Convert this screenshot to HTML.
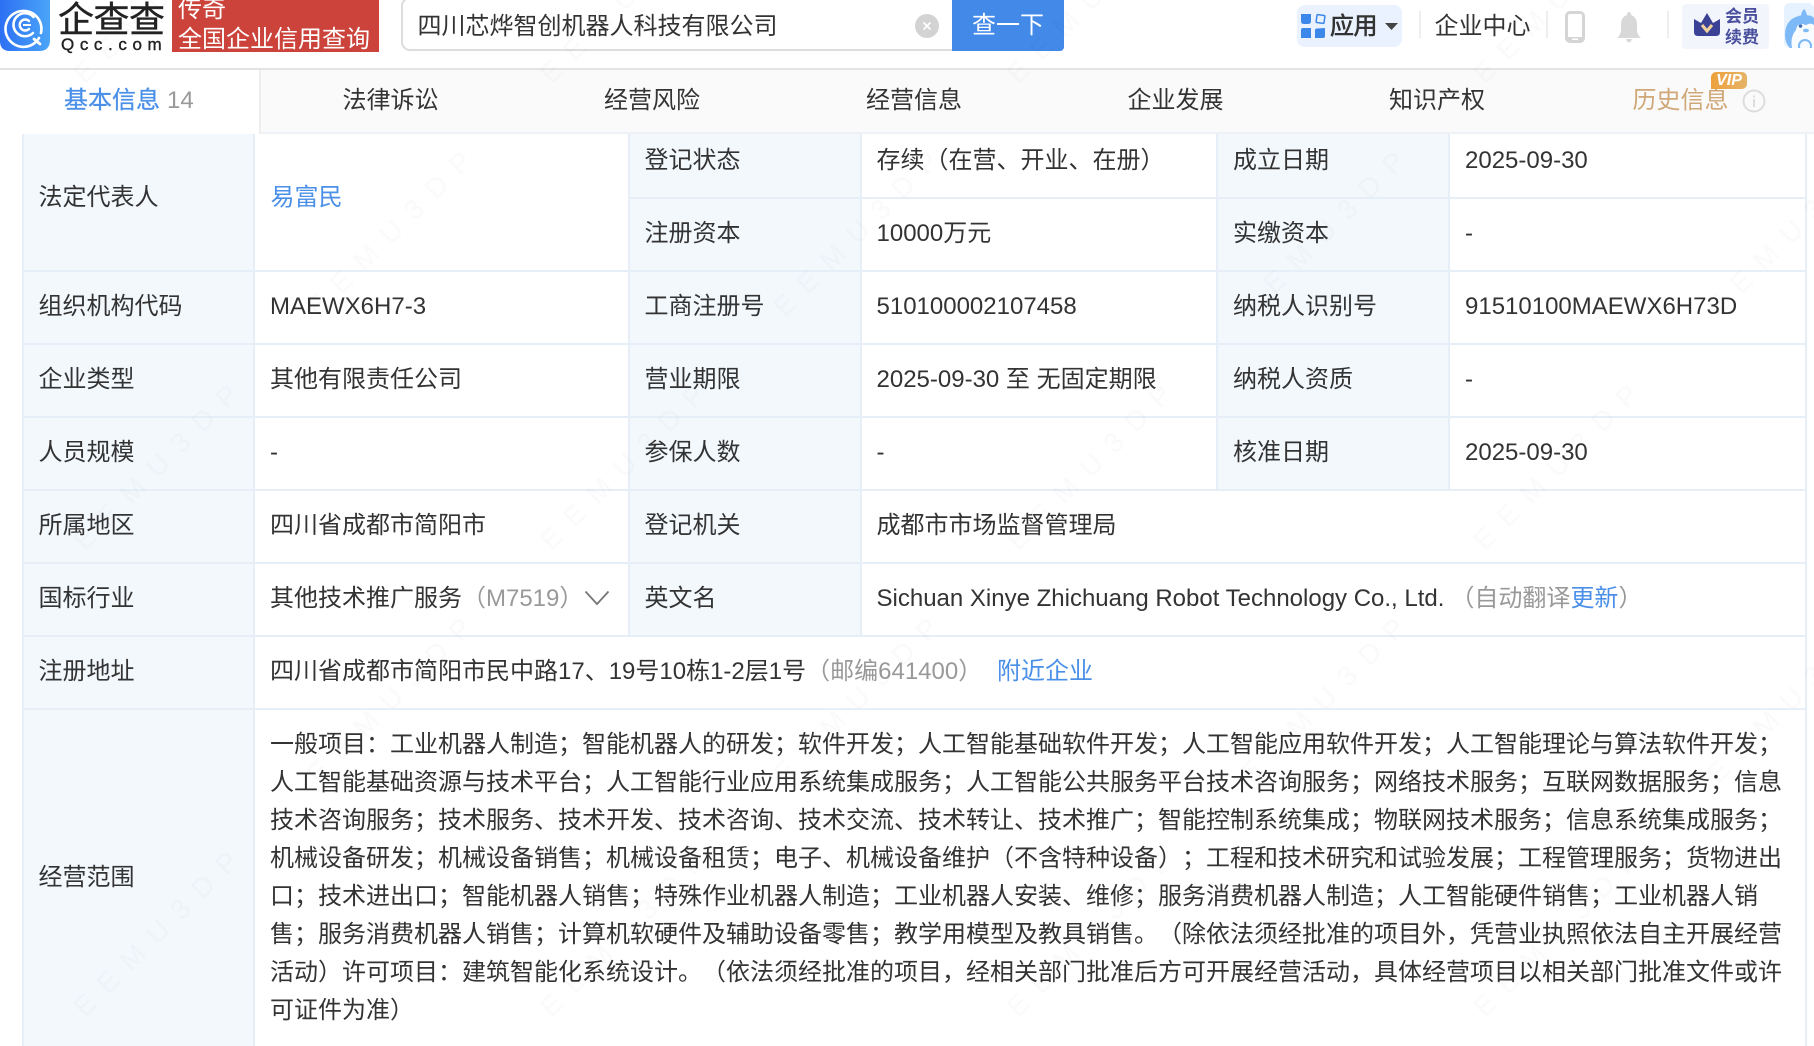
<!DOCTYPE html>
<html lang="zh-CN"><head><meta charset="utf-8"><title>企查查</title>
<style>
html,body{margin:0;padding:0;background:#fff}
body{width:1814px;height:1046px;position:relative;overflow:hidden;font-family:"Liberation Sans","Noto Sans CJK SC",sans-serif;font-size:24px;color:#333;text-spacing-trim:space-all;font-feature-settings:"chws" 0,"halt" 0,"palt" 0}
.a{position:absolute}
.t{position:absolute;white-space:nowrap;line-height:36px;height:34px}
.l{position:absolute;background:#f3f8fd}
.h{position:absolute;height:2px;background:#e6eff7;left:23px;width:1784px}
.v{position:absolute;width:2px;background:#e6eff7}
.g{color:#999}.b{color:#4a90e8}
.s{position:absolute;width:2px;background:#eee}
</style></head><body>

<!-- table -->
<div class="l" style="left:23px;top:134px;width:230px;height:912px"></div>
<div class="l" style="left:629px;top:134px;width:231px;height:502px"></div>
<div class="l" style="left:1217px;top:134px;width:231px;height:356px"></div>
<div class="h" style="top:197px;left:629px;width:1178px"></div>
<div class="h" style="top:270px"></div><div class="h" style="top:343px"></div><div class="h" style="top:416px"></div>
<div class="h" style="top:489px"></div><div class="h" style="top:562px"></div><div class="h" style="top:635px"></div><div class="h" style="top:708px"></div>
<div class="v" style="left:22px;top:134px;height:912px"></div>
<div class="v" style="left:253px;top:134px;height:912px"></div>
<div class="v" style="left:628px;top:134px;height:502px"></div>
<div class="v" style="left:860px;top:134px;height:502px"></div>
<div class="v" style="left:1216px;top:134px;height:356px"></div>
<div class="v" style="left:1448px;top:134px;height:356px"></div>
<div class="v" style="left:1805px;top:134px;height:912px"></div>

<div class="t" style="left:38.5px;top:180px">法定代表人</div>
<div class="t b" style="left:270.5px;top:180px">易富民</div>
<div class="t" style="left:644.5px;top:143px">登记状态</div>
<div class="t" style="left:876.5px;top:143px">存续（在营、开业、在册）</div>
<div class="t" style="left:1233px;top:143px">成立日期</div>
<div class="t" style="left:1465px;top:143px">2025-09-30</div>
<div class="t" style="left:644.5px;top:216px">注册资本</div>
<div class="t" style="left:876.5px;top:216px">10000万元</div>
<div class="t" style="left:1233px;top:216px">实缴资本</div>
<div class="t" style="left:1465px;top:216px">-</div>

<div class="t" style="left:38.5px;top:289px">组织机构代码</div>
<div class="t" style="left:270px;top:289px">MAEWX6H7-3</div>
<div class="t" style="left:644.5px;top:289px">工商注册号</div>
<div class="t" style="left:876.5px;top:289px">510100002107458</div>
<div class="t" style="left:1233px;top:289px">纳税人识别号</div>
<div class="t" style="left:1465px;top:289px">91510100MAEWX6H73D</div>

<div class="t" style="left:38.5px;top:362px">企业类型</div>
<div class="t" style="left:270px;top:362px">其他有限责任公司</div>
<div class="t" style="left:644.5px;top:362px">营业期限</div>
<div class="t" style="left:876.5px;top:362px">2025-09-30 至 无固定期限</div>
<div class="t" style="left:1233px;top:362px">纳税人资质</div>
<div class="t" style="left:1465px;top:362px">-</div>

<div class="t" style="left:38.5px;top:435px">人员规模</div>
<div class="t" style="left:270px;top:435px">-</div>
<div class="t" style="left:644.5px;top:435px">参保人数</div>
<div class="t" style="left:876.5px;top:435px">-</div>
<div class="t" style="left:1233px;top:435px">核准日期</div>
<div class="t" style="left:1465px;top:435px">2025-09-30</div>

<div class="t" style="left:38.5px;top:508px">所属地区</div>
<div class="t" style="left:270px;top:508px">四川省成都市简阳市</div>
<div class="t" style="left:644.5px;top:508px">登记机关</div>
<div class="t" style="left:876.5px;top:508px">成都市市场监督管理局</div>

<div class="t" style="left:38.5px;top:581px">国标行业</div>
<div class="t" style="left:270px;top:581px">其他技术推广服务<span class="g">（M7519）</span></div>
<svg class="a" style="left:584px;top:590px" width="26" height="16" viewBox="0 0 26 16"><path d="M1.5 1.5 L13 14 L24.5 1.5" fill="none" stroke="#777" stroke-width="1.8"/></svg>
<div class="t" style="left:644.5px;top:581px">英文名</div>
<div class="t" style="left:876.5px;top:581px">Sichuan Xinye Zhichuang Robot Technology Co., Ltd.<span class="g" style="margin-left:6px">（自动翻译</span><span class="b">更新</span><span class="g">）</span></div>

<div class="t" style="left:38.5px;top:654px">注册地址</div>
<div class="t" style="left:270px;top:654px">四川省成都市简阳市民中路17、19号10栋1-2层1号<span class="g">（邮编641400）</span></div>
<div class="t b" style="left:997px;top:654px">附近企业</div>

<div class="t" style="left:38.5px;top:860px">经营范围</div>
<div class="a" style="left:270px;top:726px;line-height:38px;white-space:nowrap">一般项目：工业机器人制造；智能机器人的研发；软件开发；人工智能基础软件开发；人工智能应用软件开发；人工智能理论与算法软件开发；<br>人工智能基础资源与技术平台；人工智能行业应用系统集成服务；人工智能公共服务平台技术咨询服务；网络技术服务；互联网数据服务；信息<br>技术咨询服务；技术服务、技术开发、技术咨询、技术交流、技术转让、技术推广；智能控制系统集成；物联网技术服务；信息系统集成服务；<br>机械设备研发；机械设备销售；机械设备租赁；电子、机械设备维护（不含特种设备）；工程和技术研究和试验发展；工程管理服务；货物进出<br>口；技术进出口；智能机器人销售；特殊作业机器人制造；工业机器人安装、维修；服务消费机器人制造；人工智能硬件销售；工业机器人销<br>售；服务消费机器人销售；计算机软硬件及辅助设备零售；教学用模型及教具销售。（除依法须经批准的项目外，凭营业执照依法自主开展经营<br>活动）许可项目：建筑智能化系统设计。（依法须经批准的项目，经相关部门批准后方可开展经营活动，具体经营项目以相关部门批准文件或许<br>可证件为准）</div>

<!-- tabs -->
<div class="a" style="left:0;top:69px;width:1814px;height:63px;background:#fafafa;border-bottom:2px solid #eef1f5"></div>
<div class="a" style="left:0;top:69px;width:259px;height:65px;background:#fff;border-right:2px solid #eee"></div>
<div class="t b" style="left:64px;top:83px;-webkit-text-stroke:.3px #4a90e8">基本信息</div>
<div class="t" style="left:167px;top:83px;color:#999">14</div>
<div class="t" style="left:342.5px;top:83px">法律诉讼</div>
<div class="t" style="left:604px;top:83px">经营风险</div>
<div class="t" style="left:866px;top:83px">经营信息</div>
<div class="t" style="left:1127.5px;top:83px">企业发展</div>
<div class="t" style="left:1389px;top:83px">知识产权</div>
<div class="t" style="left:1632.5px;top:83px;color:#d0a777">历史信息</div>
<div class="a" style="left:1711px;top:72px;width:36px;height:17px;background:linear-gradient(90deg,#eea13c,#e6b368);border-radius:5px 5px 5px 0;color:#fff;font:italic bold 16px/17px 'Liberation Sans',sans-serif;text-align:center">VIP</div>
<svg class="a" style="left:1741px;top:88px" width="26" height="26" viewBox="0 0 26 26"><circle cx="13" cy="13" r="10.5" fill="none" stroke="#ddd" stroke-width="2"/><rect x="12" y="11" width="2" height="8" fill="#ddd"/><rect x="12" y="7.5" width="2" height="2" fill="#ddd"/></svg>

<!-- header -->
<div class="a" style="left:0;top:0;width:1814px;height:68px;background:#fff;border-bottom:2px solid #e3e3e3"></div>
<svg class="a" style="left:0;top:0" width="50" height="51" viewBox="0 0 50 51"><defs><linearGradient id="lg" x1="0" x2="1" y1="0" y2="0"><stop offset="0" stop-color="#2c70f4"/><stop offset="1" stop-color="#4ba5f8"/></linearGradient></defs>
<path d="M0 0H50V40Q50 51 39 51H10Q0 51 0 41Z" fill="url(#lg)"/>
<path d="M39 38A18 18 0 1 1 41 33" fill="none" stroke="#fff" stroke-width="2.6" stroke-linecap="round"/>
<path d="M34 39L40 44" stroke="#fff" stroke-width="2.8" stroke-linecap="round"/>
<path d="M33 33A11.5 11.5 0 1 1 33.5 17" fill="none" stroke="#fff" stroke-width="2.6" stroke-linecap="round"/>
<path d="M29 29A5.5 5.5 0 1 1 29 21" fill="none" stroke="#fff" stroke-width="2.4" stroke-linecap="round"/>
<path d="M23 25H31" stroke="#fff" stroke-width="2"/></svg>
<div class="a" style="left:58px;top:-3px;font-size:36px;line-height:46px;letter-spacing:-.5px;color:#222;white-space:nowrap;-webkit-text-stroke:.4px #222">企查查</div>
<div class="a" style="left:61px;top:35px;font-size:17px;line-height:20px;letter-spacing:5.6px;color:#222;white-space:nowrap;-webkit-text-stroke:.4px #222">Qcc.com</div>
<div class="a" style="left:172px;top:0;width:207px;height:52px;background:#cc433b;overflow:hidden;color:#fff">
<div class="t" style="left:6px;top:-8px">传奇</div><div class="t" style="left:6px;top:22px">全国企业信用查询</div></div>

<div class="a" style="left:401px;top:-3px;width:560px;height:50px;border:2px solid #ddd;border-radius:9px;background:#fff"></div>
<div class="t" style="left:417.5px;top:9px">四川芯烨智创机器人科技有限公司</div>
<svg class="a" style="left:915px;top:14px" width="24" height="24" viewBox="0 0 24 24"><circle cx="12" cy="12" r="12" fill="#d3d3d3"/><path d="M8.5 8.5L15.5 15.5M15.5 8.5L8.5 15.5" stroke="#fff" stroke-width="1.6"/></svg>
<div class="a" style="left:952px;top:0;width:112px;height:51px;background:#4289e8;border-radius:0 0 4px 0;color:#fff;text-align:center;line-height:51px">查一下</div>

<div class="a" style="left:1297px;top:5px;width:105px;height:42px;background:#eaf2ff;border-radius:8px"></div>
<svg class="a" style="left:1300px;top:12px" width="28" height="28" viewBox="0 0 28 28"><path d="M1 2H11V9Q11 12 8 12H4Q1 12 1 9Z" fill="#3c87ea"/><rect x="16.5" y="3" width="8" height="8" rx="1" fill="none" stroke="#3c87ea" stroke-width="1.5" transform="rotate(8 20.5 7)"/><path d="M3 16H11V26H1V18Q1 16 3 16Z" fill="#3c87ea"/><path d="M15 18Q15 16.5 17 16.5L25 16V24Q25 26 23 26H15Z" fill="#3c87ea"/></svg>
<div class="t" style="left:1330px;top:9px;color:#333;-webkit-text-stroke:.6px #333;letter-spacing:-.5px">应用</div>
<svg class="a" style="left:1385px;top:23px" width="13" height="7" viewBox="0 0 13 7"><path d="M0 0H13L6.5 7Z" fill="#444"/></svg>
<div class="s" style="left:1419px;top:11px;height:27px"></div>
<div class="t" style="left:1434.5px;top:9px">企业中心</div>
<div class="s" style="left:1546px;top:11px;height:27px"></div>
<svg class="a" style="left:1565px;top:11px" width="20" height="32" viewBox="0 0 20 32"><rect x="1.5" y="1.5" width="17" height="29" rx="3.5" fill="none" stroke="#d5d5d5" stroke-width="3"/><rect x="1.5" y="26" width="17" height="5" fill="#d5d5d5"/><rect x="7" y="27.5" width="6" height="1.5" fill="#fff"/></svg>
<svg class="a" style="left:1616px;top:11px" width="26" height="32" viewBox="0 0 26 32"><path d="M13 1Q15 1 15 4Q21 6 21 14V20Q22 25 25 27H1Q4 25 5 20V14Q5 6 11 4Q11 1 13 1Z" fill="#d8d8d8"/><path d="M10 28H16Q15 31.5 13 31.5Q11 31.5 10 28Z" fill="#d8d8d8"/></svg>
<div class="s" style="left:1667px;top:11px;height:27px"></div>
<div class="a" style="left:1682px;top:4px;width:87px;height:45px;background:#f3f5fd;border-radius:4px"></div>
<svg class="a" style="left:1693px;top:12px" width="28" height="25" viewBox="0 0 28 25"><path d="M1 7L8 11L14 1L20 11L27 7V20Q27 24 23 24H5Q1 24 1 20Z" fill="#3b4296"/><path d="M9 13L14 19L19 13" fill="none" stroke="#f2d29b" stroke-width="3"/></svg>
<div class="a" style="left:1723px;top:6px;width:38px;font-size:17px;line-height:21px;font-weight:700;color:#4a4f9d;text-align:center">会员<br>续费</div>
<svg class="a" style="left:1784px;top:3px" width="30" height="45" viewBox="0 0 30 45"><rect width="30" height="45" rx="6" fill="#e6f2ff"/><path d="M20 6Q23 9 23 14H17Q17 9 20 6Z" fill="#7db9f6"/><path d="M1 32Q1 14 20 12Q28 12 30 15V45H6Q1 40 1 32Z" fill="#7db9f6"/><path d="M8 45Q6 34 12 27Q13 20 19 21Q22 23 24 21Q28 20 30 22V45Z" fill="#f8fcff"/><circle cx="16.5" cy="23" r="1.8" fill="#3a6fb5"/><ellipse cx="22" cy="27.5" rx="3" ry="1.8" fill="#7db9f6"/><circle cx="21" cy="43" r="6" fill="none" stroke="#7db9f6" stroke-width="2"/></svg>

<!-- faint watermark -->
<svg class="a" style="left:0;top:0;pointer-events:none" width="1814" height="1046"><defs><pattern id="wm" width="330" height="330" patternUnits="userSpaceOnUse" patternTransform="rotate(-45)"><text x="0" y="120" font-family="Liberation Sans, sans-serif" font-size="28" letter-spacing="14" fill="#000" fill-opacity=".018">EEMU3DP</text></pattern></defs><rect width="1814" height="1046" fill="url(#wm)"/></svg>
</body></html>
